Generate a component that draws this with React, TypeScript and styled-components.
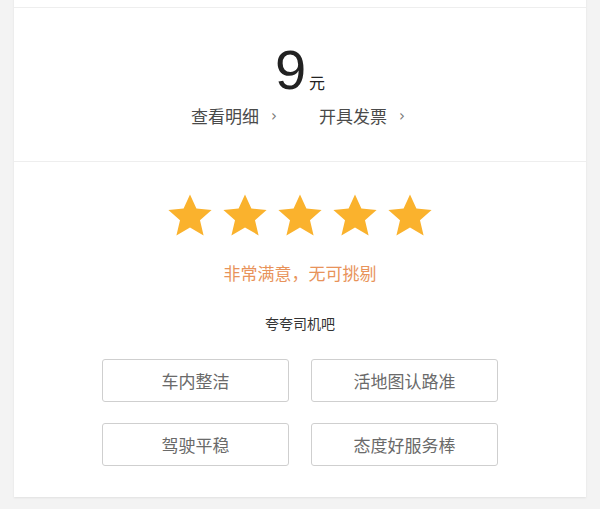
import React from 'react';
import styled, { createGlobalStyle } from 'styled-components';

const GlobalStyle = createGlobalStyle`
  html, body {
    margin: 0;
    padding: 0;
    background: #f3f3f3;
    font-family: "Noto Sans CJK SC", "Noto Sans", sans-serif;
  }
`;

const Page = styled.div`
  width: 600px;
  height: 509px;
  overflow: hidden;
  padding: 0 14px;
  box-sizing: border-box;
`;

const Card = styled.div`
  background: #fff;
  box-shadow: 0 1px 2px rgba(0, 0, 0, 0.08);
  margin-top: -10px;
`;

const TopStrip = styled.div`
  height: 17px;
  border-bottom: 1px solid #eeeeee;
`;

const FareSection = styled.div`
  height: 154px;
  border-bottom: 1px solid #eeeeee;
  display: flex;
  flex-direction: column;
  align-items: center;
  padding-top: 34px;
  box-sizing: border-box;
`;

const Price = styled.div`
  display: flex;
  align-items: baseline;
  color: #222;
  line-height: 1;
`;

const Amount = styled.span`
  font-family: "Liberation Sans", Arial, sans-serif;
  font-size: 56px;
  font-weight: 300;
`;

const Unit = styled.span`
  font-size: 16px;
  margin-left: 3px;
`;

const Links = styled.div`
  display: flex;
  gap: 42px;
  margin-top: 5px;
  margin-right: 4px;
`;

const LinkItem = styled.span`
  font-size: 17px;
  color: #4a4a4a;
  display: flex;
  align-items: center;
  gap: 12px;
`;

const Chevron = styled.span`
  font-family: "DejaVu Sans", sans-serif;
  font-size: 15px;
  color: #777;
`;

const RateSection = styled.div`
  height: 335px;
  display: flex;
  flex-direction: column;
  align-items: center;
  padding-top: 30px;
  box-sizing: border-box;
`;

const Stars = styled.div`
  display: flex;
  gap: 7px;
`;

const Verdict = styled.div`
  margin-top: 20px;
  font-size: 17px;
  color: #e8935a;
`;

const Prompt = styled.div`
  margin-top: 28px;
  font-size: 14px;
  color: #333;
`;

const TagGrid = styled.div`
  margin-top: 26px;
  display: grid;
  grid-template-columns: 187px 187px;
  column-gap: 22px;
  row-gap: 21px;
`;

const Tag = styled.button`
  height: 43px;
  border: 1px solid #cfcfcf;
  border-radius: 3px;
  background: #fff;
  font-family: "Noto Sans CJK SC", sans-serif;
  font-size: 17px;
  color: #6a6a6a;
  padding: 0;
`;

const Star = () => (
  <svg width="48" height="48" viewBox="0 0 24 24">
    <path
      d="M12 1.2l3.2 7.1 7.6.7-5.8 5.1 1.8 7.6L12 17.7l-6.8 4 1.8-7.6L1.2 9l7.6-.7z"
      fill="#fab22d"
    />
  </svg>
);

const tags = ['车内整洁', '活地图认路准', '驾驶平稳', '态度好服务棒'];

export default function App() {
  return (
    <>
      <GlobalStyle />
      <Page>
        <Card>
          <TopStrip />
          <FareSection>
            <Price>
              <Amount>9</Amount>
              <Unit>元</Unit>
            </Price>
            <Links>
              <LinkItem>查看明细<Chevron>›</Chevron></LinkItem>
              <LinkItem>开具发票<Chevron>›</Chevron></LinkItem>
            </Links>
          </FareSection>
          <RateSection>
            <Stars>
              {[0, 1, 2, 3, 4].map(i => <Star key={i} />)}
            </Stars>
            <Verdict>非常满意，无可挑剔</Verdict>
            <Prompt>夸夸司机吧</Prompt>
            <TagGrid>
              {tags.map(t => <Tag key={t}>{t}</Tag>)}
            </TagGrid>
          </RateSection>
        </Card>
      </Page>
    </>
  );
}
